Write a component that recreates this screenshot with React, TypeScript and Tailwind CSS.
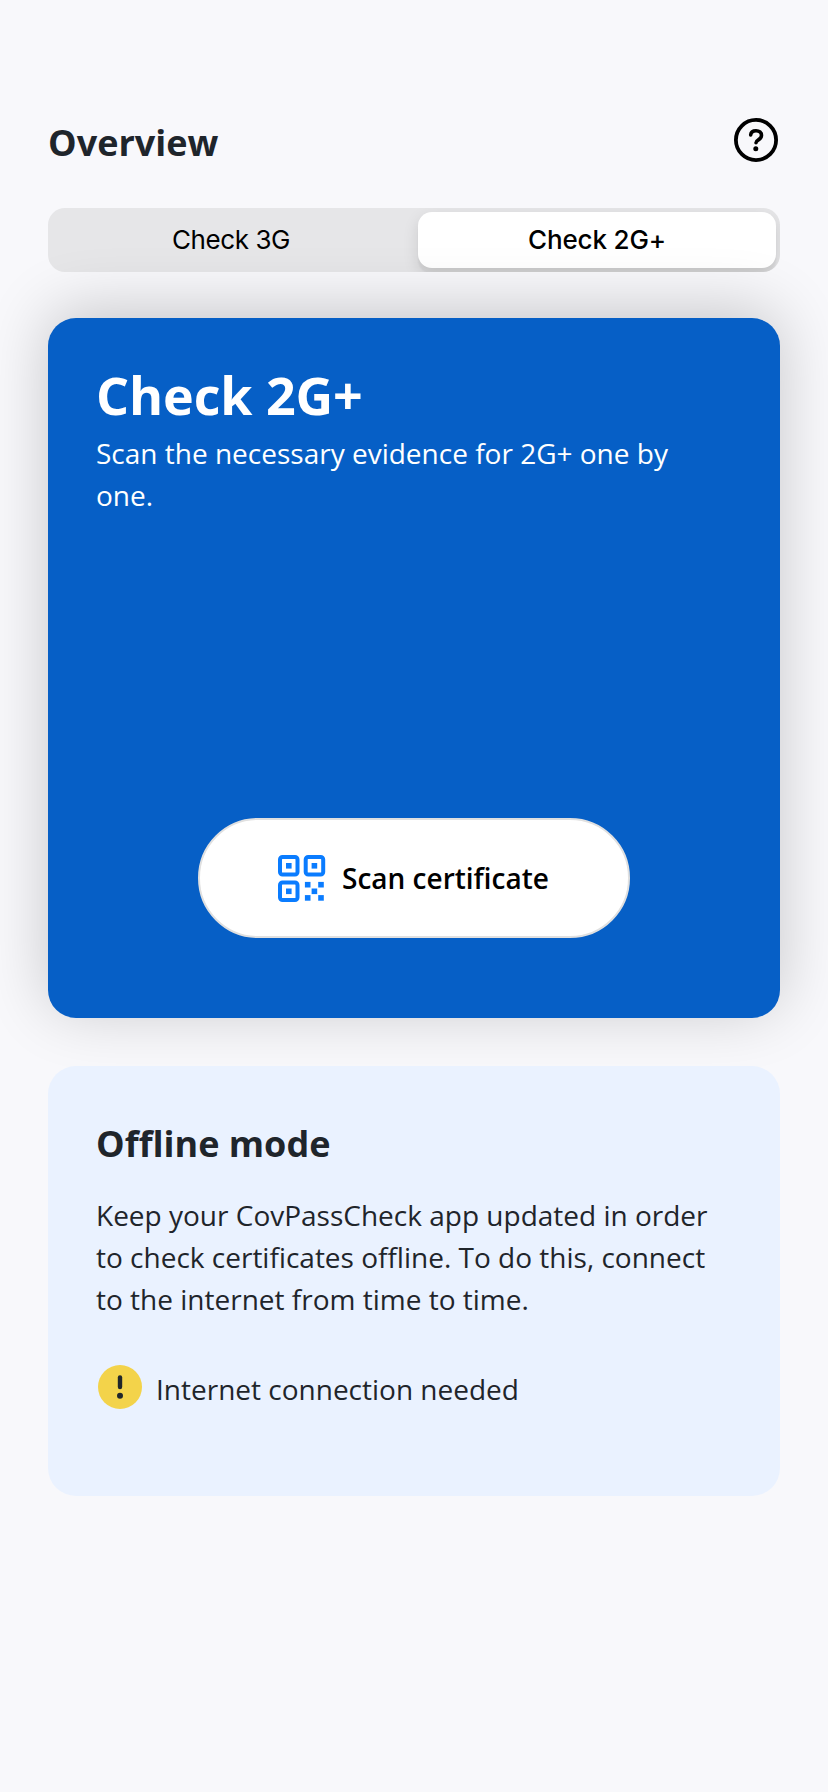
function HelpIcon() {
  return (
    <svg width="44" height="44" viewBox="0 0 44 44" fill="none" aria-hidden="true">
      <circle cx="22" cy="22" r="20.1" stroke="#000" strokeWidth="3.8" />
      <path
        d="M16.7 16.9c.2-2.600 2.300-4.200 5.300-4.200 3.300 0 5.500 1.800 5.500 4.600 0 2-1 3.200-2.800 4.300-1.900 1.200-2.700 1.900-2.700 3.200"
        stroke="#000"
        strokeWidth="3.600"
        strokeLinecap="round"
        strokeLinejoin="round"
      />
      <circle cx="21.800" cy="30.700" r="2.500" fill="#000" />
    </svg>
  );
}

function QrIcon() {
  return (
    <svg width="48" height="48" viewBox="0 0 48 48" fill="none" aria-hidden="true">
      <g stroke="#0a7cff" strokeWidth="4">
        <rect x="2" y="2" width="17.500" height="17.500" rx="2.500" />
        <rect x="27.700" y="2" width="17.500" height="17.500" rx="2.500" />
        <rect x="2" y="27.500" width="17.500" height="17.500" rx="2.500" />
      </g>
      <g fill="#0a7cff">
        <rect x="8" y="8" width="5.600" height="5.600" />
        <rect x="33.600" y="8" width="5.600" height="5.600" />
        <rect x="8" y="33.500" width="5.600" height="5.600" />
        <rect x="26.900" y="26.900" width="5.600" height="5.600" />
        <rect x="40.200" y="26.900" width="5.600" height="5.600" />
        <rect x="33.600" y="33.500" width="5.600" height="5.600" />
        <rect x="26.900" y="40.100" width="5.600" height="5.600" />
        <rect x="40.200" y="40.100" width="5.600" height="5.600" />
      </g>
    </svg>
  );
}

function WarningIcon() {
  return (
    <svg width="44" height="44" viewBox="0 0 44 44" aria-hidden="true">
      <circle cx="22" cy="22" r="22" fill="#f3d34a" />
      <path d="M22 12.400v9.600" stroke="#1f252b" strokeWidth="4.400" strokeLinecap="round" />
      <circle cx="22" cy="30.800" r="3" fill="#1f252b" />
    </svg>
  );
}

export default function App() {
  return (
    <div className="flex min-h-[1792px] w-full flex-col bg-[#f8f8fb] px-12 pt-[118px] font-['Open_Sans',sans-serif] text-[#1f252b]">
      <header className="flex h-12 items-start justify-between">
        <h1 className="pt-px text-[36px] leading-[48px] font-bold">Overview</h1>
        <button className="mr-0.5" aria-label="Help">
          <HelpIcon />
        </button>
      </header>

      <div className="mt-[42px] flex h-16 overflow-hidden rounded-[17px] bg-[#e6e6e8] p-1 font-['Inter',sans-serif] text-[26px] text-black">
        <button className="flex-1 pr-2 pb-0.5 tracking-[-0.4px]">Check 3G</button>
        <button className="w-[358px] rounded-[14px] bg-white pb-0.5 font-medium tracking-[-0.15px] shadow-[0_6px_16px_rgba(0,0,0,0.12),0_6px_2px_rgba(0,0,0,0.04)]">
          Check 2G+
        </button>
      </div>

      <section className="mt-[46px] flex h-[700px] flex-col rounded-[28px] bg-[#065fc6] px-12 pt-[41px] pb-20 text-white shadow-[0_-8px_64px_rgba(0,0,0,0.2)]">
        <h2 className="text-[52px] leading-[72px] font-bold tracking-[-0.1px]">Check 2G+</h2>
        <p className="mt-px text-[28px] leading-[42px]">
          Scan the necessary evidence for 2G+ one by one.
        </p>
        <button className="mt-auto flex h-[120px] w-[432px] items-center gap-4 self-center rounded-[60px] border-2 border-[#e0e0e0] bg-white pl-[78px] text-black">
          <span className="pt-0.5">
            <QrIcon />
          </span>
          <span className="text-[28px] leading-[42px] font-semibold">Scan certificate</span>
        </button>
      </section>

      <section className="mt-12 h-[430px] rounded-[28px] bg-[#eaf2ff] px-12 pt-[54px]">
        <h2 className="text-[36px] leading-[48px] font-bold">Offline mode</h2>
        <p className="mt-[26px] text-[28px] leading-[42px]">
          Keep your CovPassCheck app updated in order to check certificates offline. To do this, connect to the
          internet from time to time.
        </p>
        <div className="mt-[45px] flex items-start gap-[14px] pl-0.5">
          <WarningIcon />
          <span className="mt-[3px] text-[28px] leading-[42px]">Internet connection needed</span>
        </div>
      </section>
    </div>
  );
}
